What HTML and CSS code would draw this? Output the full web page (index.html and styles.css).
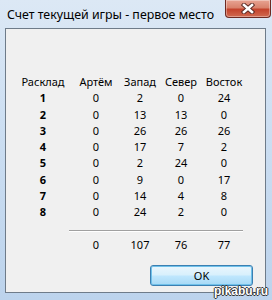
FILE: index.html
```html
<!DOCTYPE html>
<html lang="ru">
<head>
    <meta charset="UTF-8">
    <title>Счет текущей игры</title>
    <link rel="stylesheet" href="styles.css">
</head>
<body>
    <div class="window">
        <div class="titlebar">
            <span class="title">Счет текущей игры - первое место</span>
            <div class="close-btn">
                <svg width="14" height="11" viewBox="0 0 14 11">
                    <path d="M3 2 L11 9 M11 2 L3 9" stroke="#5a2a24" stroke-width="4.4" stroke-linecap="square"/>
                    <path d="M3 2 L11 9 M11 2 L3 9" stroke="#ffffff" stroke-width="2.6" stroke-linecap="square"/>
                </svg>
            </div>
        </div>
        <div class="client">
            <div class="score-grid">
                <div>Расклад</div><div>Артём</div><div>Запад</div><div>Север</div><div>Восток</div>
                <div class="num">1</div><div>0</div><div>2</div><div>0</div><div>24</div>
                <div class="num">2</div><div>0</div><div>13</div><div>13</div><div>0</div>
                <div class="num">3</div><div>0</div><div>26</div><div>26</div><div>26</div>
                <div class="num">4</div><div>0</div><div>17</div><div>7</div><div>2</div>
                <div class="num">5</div><div>0</div><div>2</div><div>24</div><div>0</div>
                <div class="num">6</div><div>0</div><div>9</div><div>0</div><div>17</div>
                <div class="num">7</div><div>0</div><div>14</div><div>4</div><div>8</div>
                <div class="num">8</div><div>0</div><div>24</div><div>2</div><div>0</div>
                <div class="divider"></div>
                <div></div><div>0</div><div>107</div><div>76</div><div>77</div>
            </div>
            <div class="buttons">
                <button class="ok-btn">OK</button>
            </div>
        </div>
        <div class="watermark">pikabu.ru</div>
    </div>
</body>
</html>
```

FILE: styles.css
```css
body {
    margin: 0;
    font-family: "Noto Sans", Tahoma, sans-serif;
}
.window {
    position: relative;
    width: 272px;
    height: 300px;
    box-sizing: border-box;
    padding: 0 6px 7px 5px;
    display: flex;
    flex-direction: column;
    background: linear-gradient(to bottom, #dce8f5 0%, #cddff2 40%, #bcd3ec 100%);
}
.titlebar {
    height: 28px;
    display: flex;
    align-items: flex-start;
    justify-content: space-between;
}
.title {
    margin: 6px 0 0 2px;
    font-size: 12.4px;
    color: #000;
}
.close-btn {
    width: 46px;
    height: 18px;
    margin-right: -5px;
    box-sizing: border-box;
    border: 1px solid #6d2a22;
    border-top: none;
    border-radius: 0 0 4px 4px;
    background: linear-gradient(to bottom, #e8a493 0%, #d9826c 45%, #c4432c 55%, #d06a50 100%);
    display: flex;
    align-items: center;
    justify-content: center;
    box-shadow: inset 0 0 0 1px rgba(255, 255, 255, 0.35);
}
.client {
    flex: 1;
    background-color: #f0f0f0;
    border: 1px solid #6e7b89;
    display: flex;
    flex-direction: column;
    font-size: 11px;
    color: #000;
}
.score-grid {
    display: grid;
    grid-template-columns: 52px 54px 34px 48px 38px;
    grid-auto-rows: 16.3px;
    padding: 45px 0 0 11px;
    text-align: center;
    line-height: 16px;
}
.score-grid .num {
    font-weight: bold;
}
.score-grid .divider {
    grid-column: 2 / 6;
    border-top: 1px solid #a0a0a0;
    border-bottom: 1px solid #ffffff;
    height: 0;
    align-self: center;
    margin-top: 4px;
}
.buttons {
    display: flex;
    justify-content: flex-end;
    padding: 12px 12px 0 0;
}
.ok-btn {
    width: 103px;
    height: 21px;
    font-family: "Noto Sans", Tahoma, sans-serif;
    font-size: 11px;
    color: #000;
    border: 1px solid #3c7fb1;
    border-radius: 3px;
    background: linear-gradient(to bottom, #eaf6fd 0%, #d9f0fc 45%, #bee6fd 55%, #a7d9f5 100%);
    box-shadow: inset 0 0 0 1px #6fc1ea;
    padding: 0;
}
.watermark {
    position: absolute;
    right: 4px;
    bottom: 2px;
    font-family: "Liberation Sans", Arial, sans-serif;
    font-size: 12px;
    font-weight: bold;
    color: #fff;
    text-shadow: -1px 0 #333, 1px 0 #333, 0 -1px #333, 0 1px #333;
}
```
